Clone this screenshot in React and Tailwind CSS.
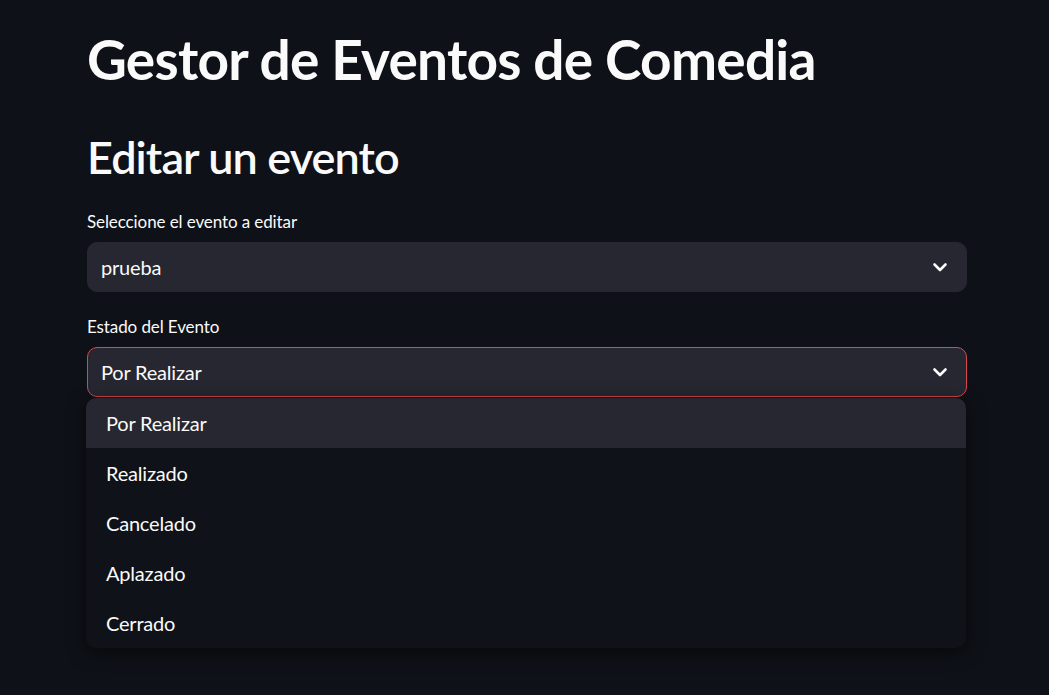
import React from "react";

function Chevron() {
  return (
    <svg width="16" height="16" viewBox="0 0 16 16" className="shrink-0">
      <polyline points="2.5,5.5 8,11 13.5,5.5" fill="none" stroke="#fafafa" strokeWidth="2.6" strokeLinecap="round" strokeLinejoin="round" />
    </svg>
  );
}

export default function App() {
  const opts = ["Por Realizar", "Realizado", "Cancelado", "Aplazado", "Cerrado"];
  return (
    <div
      className="min-h-[695px] w-full bg-[#0e1117] text-[#fafafa] overflow-hidden"
      style={{ fontFamily: "Lato, 'Noto Sans', sans-serif" }}
    >
      <div className="ml-[87px] w-[880px] pt-[26px]">
        <h1 className="text-[55px] leading-[66px] font-bold tracking-[-0.75px]">Gestor de Eventos de Comedia</h1>
        <h2 className="mt-[38px] text-[45px] leading-[54px] font-semibold tracking-[-0.9px]">Editar un evento</h2>

        <div className="mt-[26px] text-[17px] leading-[24px] mb-[8px] tracking-[-0.1px]">Seleccione el evento a editar</div>
        <div className="h-[50px] rounded-[10px] bg-[#262730] border border-[#262730] flex items-center pl-[13px] pr-[18px]">
          <span className="flex-1 text-[20px] tracking-[-0.2px]">prueba</span>
          <Chevron />
        </div>

        <div className="mt-[23px] text-[17px] leading-[24px] mb-[8px] tracking-[-0.1px]">Estado del Evento</div>
        <div className="relative">
          <div className="h-[50px] rounded-[10px] bg-[#262730] border border-[#d9474e] flex items-center pl-[13px] pr-[18px]">
            <span className="flex-1 text-[20px] tracking-[-0.2px]">Por Realizar</span>
            <Chevron />
          </div>
          <div className="absolute left-[-1px] top-[51px] w-[880px] rounded-[10px] bg-[#0f1218] shadow-[0_4px_18px_rgba(0,0,0,0.55)] overflow-hidden">
            {opts.map((o, i) => (
              <div
                key={o}
                className={
                  i === 0
                    ? "h-[49.5px] flex items-center pl-[20px] text-[20px] tracking-[-0.2px] bg-[#262730]"
                    : "h-[50px] flex items-center pl-[20px] text-[20px] tracking-[-0.2px]"
                }
              >
                {o}
              </div>
            ))}
          </div>
        </div>
      </div>
    </div>
  );
}
